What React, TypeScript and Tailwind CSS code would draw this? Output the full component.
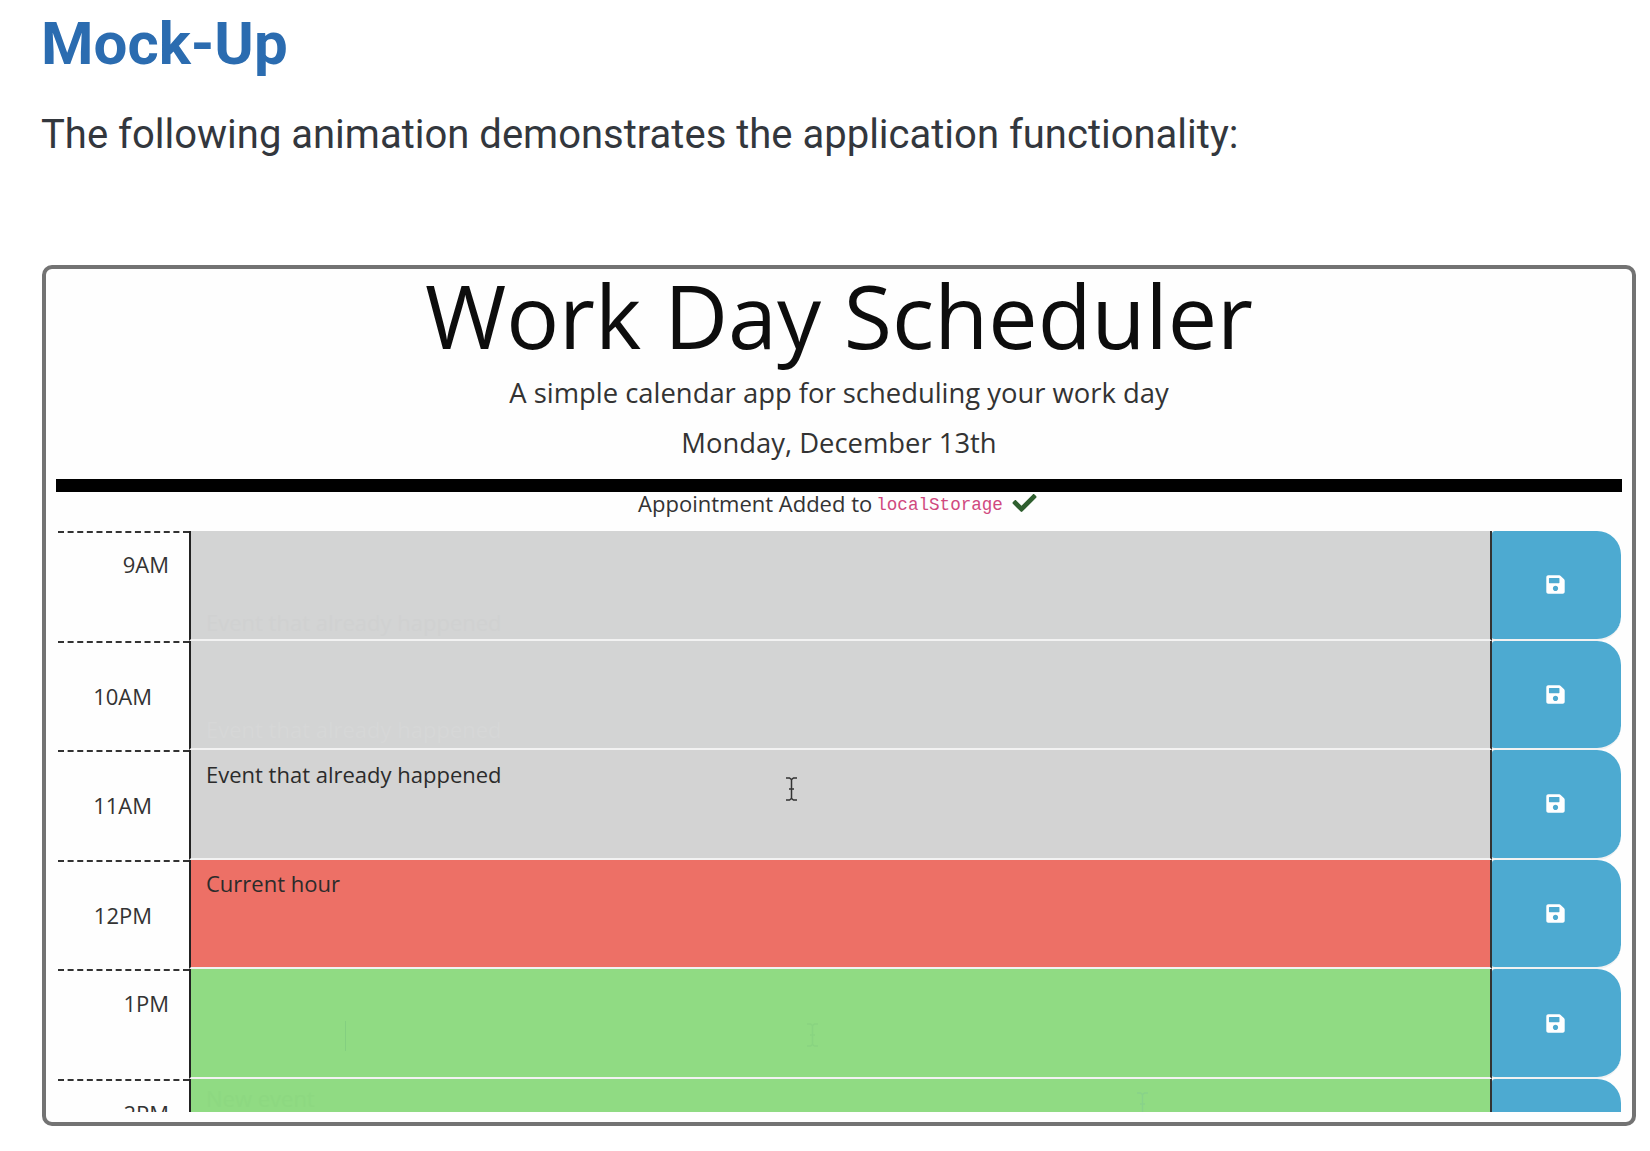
import React from "react";
import {FaCheck, FaSave} from "react-icons/fa";

interface HourRow {
  label: string;
  labelClass: string;
  slotClass: string;
  text?: string;
  textClass?: string;
  ghost?: React.ReactNode;
}

function Cursor({className}: {className: string}) {
  return (
    <svg className={`absolute ${className}`} width="13" height="24" viewBox="0 0 13 24" fill="none" stroke="currentColor" strokeWidth="1.5">
      <path d="M1 1h3.5l2 1.5 2-1.5H12M6.500 2.500v19M1 23h3.500l2-1.500 2 1.500H12M4 12h5"/>
    </svg>
  );
}

const rows: HourRow[] = [
  {
    label: "9AM",
    labelClass: "pt-[16px] pr-[20px]",
    slotClass: "bg-[#d3d4d4]",
    ghost: <span className="absolute left-[15px] top-[76px] text-[#d0d1d1]">Event that already happened</span>,
  },
  {
    label: "10AM",
    labelClass: "pt-[38px] pr-[37px]",
    slotClass: "bg-[#d3d4d4]",
    ghost: <span className="absolute left-[15px] top-[73px] text-[#d6d7d7]">Event that already happened</span>,
  },
  {
    label: "11AM",
    labelClass: "pt-[38px] pr-[37px]",
    slotClass: "bg-[#d3d3d3]",
    text: "Event that already happened",
    textClass: "pt-[9px]",
    ghost: <Cursor className="left-[594px] top-[27px] text-[#333]"/>,
  },
  {label: "12PM", labelClass: "pt-[38px] pr-[37px]", slotClass: "bg-[#ed7066]", text: "Current hour", textClass: "pt-[8px]"},
  {
    label: "1PM",
    labelClass: "pt-[17px] pr-[20px]",
    slotClass: "bg-[#90db83]",
    ghost: (
      <>
        <div className="absolute left-[154px] top-[52px] w-[1px] h-[30px] bg-[#84cf80]"></div>
        <Cursor className="left-[615px] top-[54px] text-[#89d481]"/>
      </>
    ),
  },
  {
    label: "2PM",
    labelClass: "pt-[17px] pr-[20px]",
    slotClass: "bg-[#90db83]",
    ghost: (
      <>
        <span className="absolute left-[15px] top-[4px] text-[#8dd881]">New event</span>
        <Cursor className="left-[945px] top-[13px] text-[#88d28a]"/>
      </>
    ),
  },
];

function Row({row}: {row: HourRow}) {
  return (
    <div className="flex h-[109.6px] shrink-0 text-[22px] leading-[30px]">
      <div className={`w-[131px] ml-[2px] shrink-0 border-t-2 border-dashed border-[#333] text-right text-[#333] ${row.labelClass}`}>
        {row.label}
      </div>
      <div className={`relative flex-1 overflow-hidden border-l-2 border-r-2 border-b-2 border-l-[#222] border-r-[#333] border-b-[#f2f2f2] ${row.slotClass}`}>
        {row.ghost}
        {row.text && <p className={`relative pl-[15px] text-[#2b2b2b] ${row.textClass}`}>{row.text}</p>}
      </div>
      <div className="w-[129px] mr-[1px] shrink-0 flex items-center justify-center bg-[#4daad1] rounded-tr-[24px] rounded-br-[24px] rounded-l-[3px] border-b-2 border-[#f2f2f2]">
        <FaSave className="w-[21px] h-[21px] -ml-[3px] text-white"/>
      </div>
    </div>
  );
}

export default function App() {
  return (
    <div className="w-[1650px] h-[1151px] overflow-hidden bg-white font-['Roboto',sans-serif]">
      <div className="px-[41px] pt-[6px]">
        <h1 className="text-[60px] leading-[76px] font-bold text-[#2b6cb0]">Mock-Up</h1>
        <p className="mt-[23px] text-[40px] leading-[60px] text-[#33373d]">The following animation demonstrates the application functionality:</p>
      </div>
      <div className="mt-[100px] ml-[42px] w-[1594px] h-[861px] border-4 border-[#737373] rounded-[10px] bg-[#fefefe] px-[10px] pb-[10px] font-['Open_Sans',sans-serif]">
        <div className="h-full overflow-hidden flex flex-col">
          <div className="text-center shrink-0">
            <h2 className="-mt-[2px] pb-[4px] text-[88px] leading-[96px] text-[#0d0d0d]">Work Day Scheduler</h2>
            <p className="mt-[6px] text-[27.4px] leading-[40px] text-[#333]">A simple calendar app for scheduling your work day</p>
            <p className="mt-[10px] text-[27.4px] leading-[40px] text-[#333]">Monday, December 13th</p>
          </div>
          <div className="mt-[16px] h-[13px] shrink-0 bg-black"></div>
          <div className="h-[40px] shrink-0 flex items-start justify-center -mt-[1px] pr-[2px] text-[22px] leading-[24px] text-[#333]">
            <span>Appointment Added to</span>
            <code className="ml-[4px] mt-[2px] font-['Liberation_Mono',monospace] text-[17.6px] text-[#d0497e]">localStorage</code>
            <FaCheck className="ml-[8px] w-[27px] h-[24px] text-[#2f5f2f]"/>
          </div>
          <div className="flex flex-col">
            {rows.map((row: HourRow, index: number) => (
              <Row key={`hour-row-${index}`} row={row}/>
            ))}
          </div>
        </div>
      </div>
    </div>
  );
}
